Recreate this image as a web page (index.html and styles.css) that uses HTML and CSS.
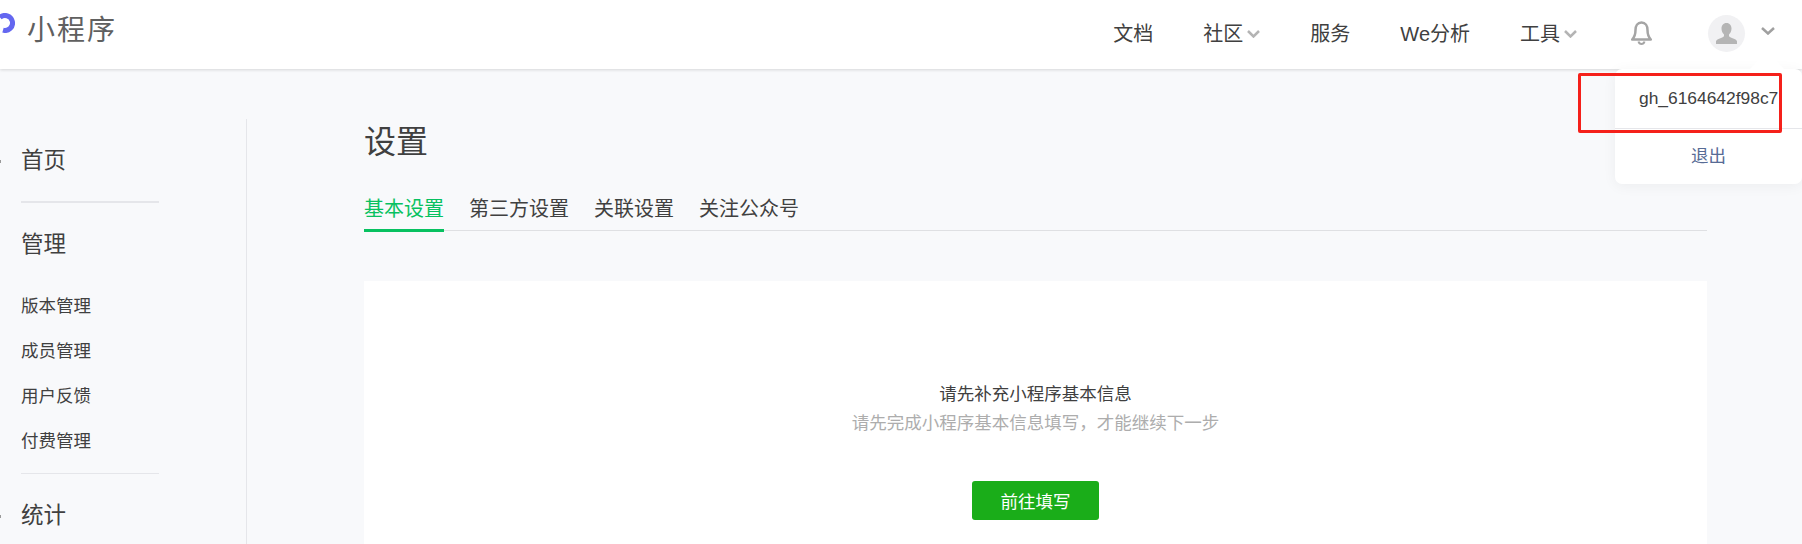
FILE: index.html
```html
<!DOCTYPE html>
<html lang="zh-CN">
<head>
    <meta charset="UTF-8">
    <meta name="viewport" content="width=device-width, initial-scale=1.0">
    <title>小程序</title>
    <link rel="stylesheet" href="styles.css">
</head>
<body>

    <header class="topbar">
        <div class="brand">
            <svg class="brand-icon" width="15" height="20" viewBox="0 0 15 20">
                <path d="M0 4.400A7.500 7.500 0 1 1 3 17.200" fill="none" stroke="#6467f0" stroke-width="5"/>
            </svg>
            <span class="brand-name">小程序</span>
        </div>
        <nav class="topnav">
            <a class="nav-item">文档</a>
            <a class="nav-item">社区<svg class="chevron" width="13" height="8" viewBox="0 0 13 8"><path d="M1 1l5.500 5.500L12 1" fill="none" stroke="#b4b4b4" stroke-width="2.500"/></svg></a>
            <a class="nav-item">服务</a>
            <a class="nav-item">We分析</a>
            <a class="nav-item">工具<svg class="chevron" width="13" height="8" viewBox="0 0 13 8"><path d="M1 1l5.500 5.500L12 1" fill="none" stroke="#b4b4b4" stroke-width="2.500"/></svg></a>
        </nav>
        <svg class="bell" width="21" height="24" viewBox="0 0 21 24">
            <path d="M10.500 1.500C6.500 1.500 4.500 5 4.500 9c0 4-1 7-3.300 9.500h18.600C17.500 16 16.500 13 16.500 9c0-4-2-7.500-6-7.500z" fill="none" stroke="#a5a5a5" stroke-width="2.500" stroke-linejoin="round"/>
            <path d="M7.500 20.500c.5 1.800 1.500 2.500 3 2.500s2.500-.7 3-2.500" fill="none" stroke="#a5a5a5" stroke-width="2"/>
        </svg>
        <div class="avatar">
            <svg width="21" height="21" viewBox="0 0 21 21">
                <path d="M10.500 0c3.300 0 5 2.500 5 5.500 0 2.500-1 4.500-2.500 6v1.500c0 1 3 1.800 5.500 3 1.500.7 2.500 1.600 2.500 2.500V21H0v-2.500c0-.9 1-1.800 2.500-2.500 2.500-1.200 5.500-2 5.500-3v-1.500c-1.500-1.500-2.500-3.500-2.500-6C5.500 2.500 7.200 0 10.500 0z" fill="#b5b5b5"/>
            </svg>
        </div>
        <svg class="chevron user-chevron" width="14" height="8" viewBox="0 0 14 8"><path d="M1 1l6 5.500L13 1" fill="none" stroke="#a0a0a0" stroke-width="2.500"/></svg>
    </header>

    <div class="layout">
        <aside class="sidebar">
            <h3 class="side-title side-marked">首页</h3>
            <div class="side-rule side-rule-first"></div>
            <h3 class="side-title">管理</h3>
            <ul class="side-list">
                <li>版本管理</li>
                <li>成员管理</li>
                <li>用户反馈</li>
                <li>付费管理</li>
            </ul>
            <div class="side-rule"></div>
            <h3 class="side-title side-marked">统计</h3>
        </aside>

        <main class="content">
            <h1 class="page-title">设置</h1>
            <div class="tabs">
                <a class="tab active">基本设置</a>
                <a class="tab">第三方设置</a>
                <a class="tab">关联设置</a>
                <a class="tab">关注公众号</a>
            </div>
            <section class="panel">
                <p class="panel-title">请先补充小程序基本信息</p>
                <p class="panel-desc">请先完成小程序基本信息填写，才能继续下一步</p>
                <button class="primary-btn">前往填写</button>
            </section>
        </main>
    </div>

    <div class="user-menu">
        <div class="user-name">gh_6164642f98c7</div>
        <a class="logout">退出</a>
    </div>
    <div class="red-box"></div>

</body>
</html>
```

FILE: styles.css
```css
html, body {
    margin: 0;
    height: 544px;
    overflow: hidden;
}
body {
    font-family: "Liberation Sans", "Noto Sans CJK SC", sans-serif;
    background-color: #f8f9fb;
    color: #404040;
    position: relative;
}
.topbar {
    height: 69px;
    background: white;
    box-shadow: 0 1px 3px rgba(0, 0, 0, 0.14);
    display: flex;
    align-items: center;
    padding: 0 27px 4px 0;
    box-sizing: border-box;
    position: relative;
}
.brand {
    display: flex;
    align-items: center;
    margin-right: auto;
}
.brand-icon {
    margin-right: 12px;
    margin-bottom: 19px;
}
.brand-name {
    font-size: 28px;
    line-height: 40px;
    letter-spacing: 2px;
    color: #606060;
    margin-bottom: 3px;
}
.topnav {
    display: flex;
    align-items: center;
    gap: 50px;
}
.nav-item {
    font-size: 20px;
    color: #404040;
    display: flex;
    align-items: center;
}
.chevron {
    margin-left: 4px;
    margin-top: 3px;
}
.bell {
    margin-left: 54px;
}
.avatar {
    width: 37px;
    height: 37px;
    border-radius: 50%;
    background-color: #f1f1f3;
    margin-left: 56px;
    margin-top: 1px;
    display: flex;
    align-items: center;
    justify-content: center;
}
.user-chevron {
    margin-left: 16px;
    margin-top: -3px;
}
.layout {
    display: flex;
    height: 475px;
    padding-top: 50px;
    box-sizing: border-box;
}
.sidebar {
    width: 225px;
    padding-left: 21px;
    border-right: 1px solid #e5e6ea;
    flex-shrink: 0;
}
.side-title {
    font-size: 22.500px;
    font-weight: normal;
    color: #404040;
    margin: 0;
    line-height: 30px;
    position: relative;
}
/* sliver of the clipped menu icon at the window edge */
.side-marked::before {
    content: "";
    position: absolute;
    left: -21px;
    top: 14px;
    width: 1px;
    height: 3px;
    background-color: #9a9a9a;
}
.sidebar > .side-title:first-child {
    margin-top: 27px;
}
.side-rule {
    width: 138px;
    height: 1px;
    background-color: #e5e6ea;
    margin: 9px 0 27px;
}
.side-rule-first {
    height: 2px;
    margin: 25px 0 27px;
}
.side-list {
    list-style: none;
    padding: 0;
    margin: 24px 0 0;
}
.side-list li {
    font-size: 17.500px;
    line-height: 45px;
    color: #404040;
}
.content {
    width: 1343px;
    margin-left: 117px;
}
.page-title {
    font-size: 32px;
    font-weight: normal;
    color: #404040;
    margin: 0;
    line-height: 46px;
}
.tabs {
    display: flex;
    gap: 25px;
    border-bottom: 1px solid #dfe0e3;
    margin-top: 30px;
    height: 35px;
}
.tab {
    font-size: 20px;
    line-height: 28px;
    color: #404040;
    height: 37px;
    box-sizing: border-box;
    white-space: nowrap;
}
.tab.active {
    color: #07c160;
    border-bottom: 3px solid #07c160;
}
.panel {
    background: white;
    margin-top: 50px;
    height: 263px;
    padding-top: 100px;
    box-sizing: border-box;
    display: flex;
    flex-direction: column;
    align-items: center;
}
.panel-title {
    font-size: 17.500px;
    line-height: 26px;
    color: #404040;
    margin: 0;
}
.panel-desc {
    font-size: 17.500px;
    line-height: 26px;
    color: #adadad;
    margin: 3px 0 0;
}
.primary-btn {
    width: 127px;
    height: 39px;
    margin-top: 45px;
    background-color: #1aad19;
    color: white;
    border: none;
    border-radius: 3px;
    font-family: inherit;
    font-size: 17.500px;
    padding: 0;
}
/* dropdown sits over the header and page */
.user-menu {
    position: absolute;
    top: 69px;
    left: 1615px;
    width: 187px;
    height: 115px;
    background: white;
    border-radius: 7px;
    box-shadow: 0 2px 14px rgba(0, 0, 0, 0.05);
}
.user-menu::before {
    content: "";
    position: absolute;
    top: -17px;
    left: 135px;
    border: 17px solid transparent;
    border-top: 0;
    border-bottom-color: white;
}
.user-name {
    height: 59px;
    line-height: 59px;
    padding-left: 24px;
    font-size: 17.400px;
    color: #404040;
    border-bottom: 1px solid #e5e6ea;
}
.logout {
    display: block;
    text-align: center;
    font-size: 17.500px;
    line-height: 55px;
    color: #576b95;
}
.red-box {
    position: absolute;
    top: 73px;
    left: 1578px;
    width: 198px;
    height: 54px;
    border: 3px solid #f5201a;
    border-radius: 2px;
}
```
